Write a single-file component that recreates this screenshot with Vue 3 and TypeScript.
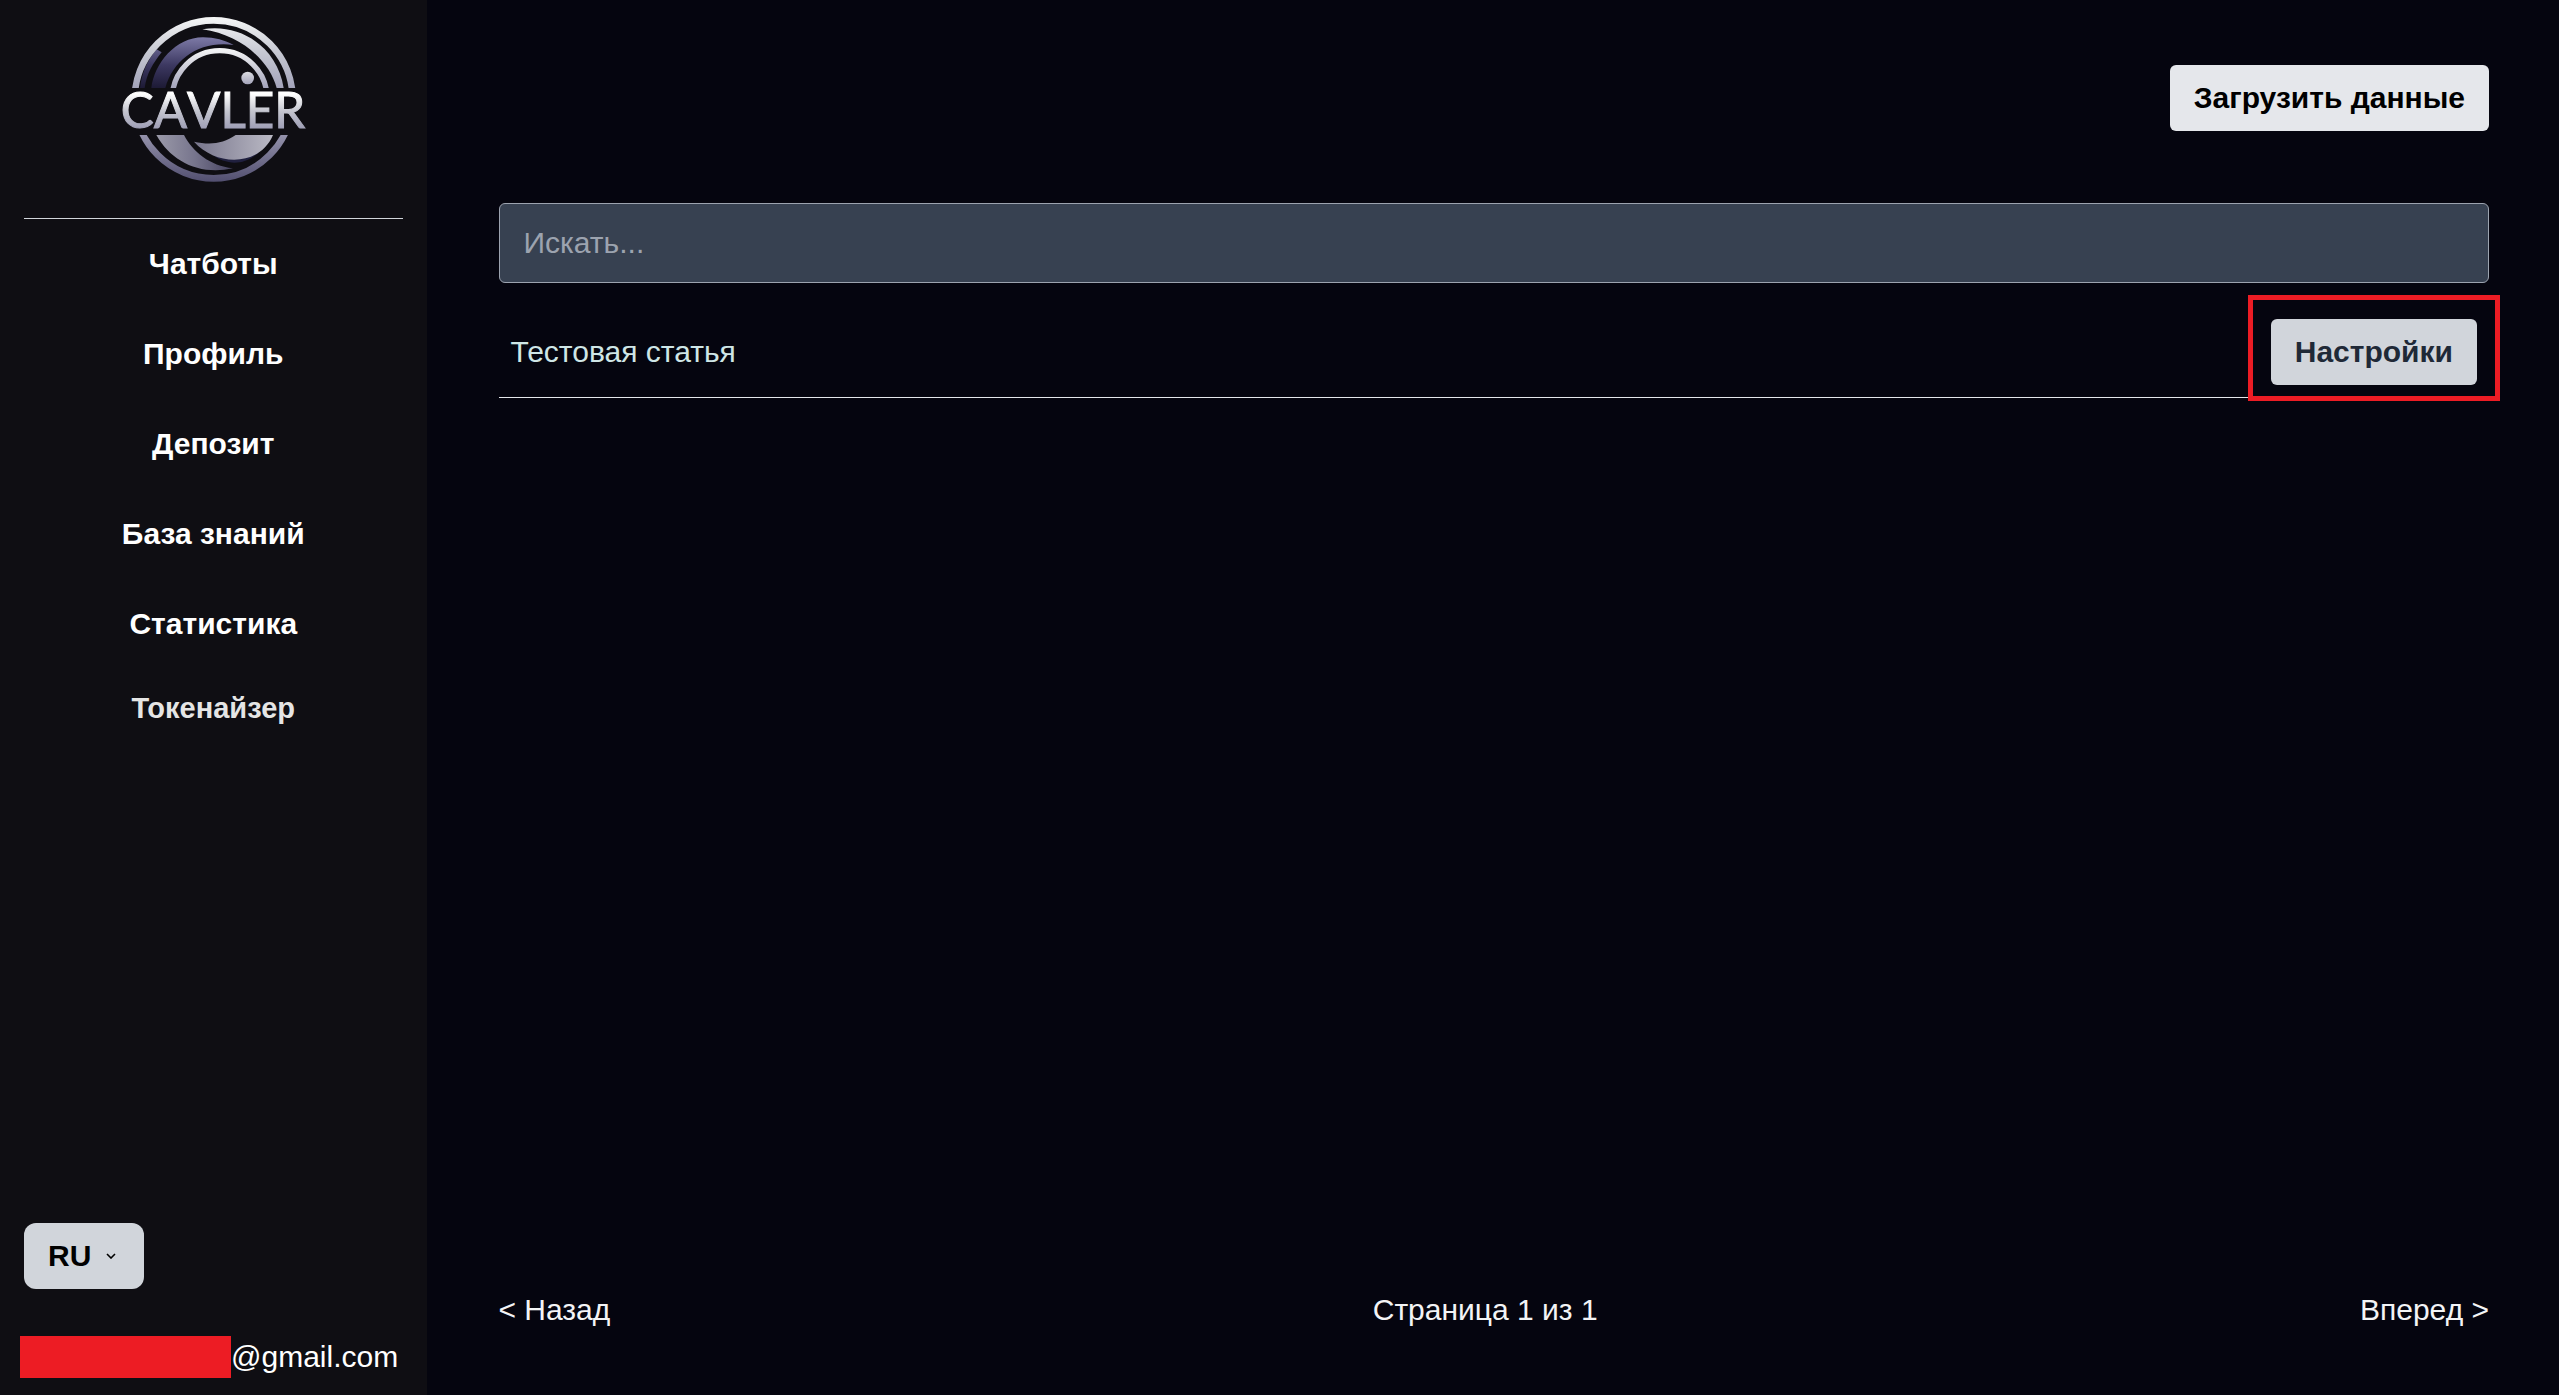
<script setup lang="ts">
import { ref } from 'vue'

interface NavItem {
  label: string
  muted?: boolean
}

const navItems: NavItem[] = [
  { label: 'Чатботы' },
  { label: 'Профиль' },
  { label: 'Депозит' },
  { label: 'База знаний' },
  { label: 'Статистика' },
  { label: 'Токенайзер', muted: true },
]

const articles = ref<string[]>(['Тестовая статья'])
const query = ref('')
const language = ref('RU')
const page = ref(1)
const pageCount = ref(1)
</script>

<template>
  <div class="app">
    <aside class="sidebar">
      <a class="brand" href="#" aria-label="Cavler">
        <svg class="logo" viewBox="52 45 576 504">
          <defs>
            <linearGradient id="ringTop" gradientUnits="userSpaceOnUse" x1="0" y1="51" x2="0" y2="264">
              <stop offset="0" stop-color="#f6f7f7" />
              <stop offset="0.5" stop-color="#c6c8d2" />
              <stop offset="1" stop-color="#a3a3ba" />
            </linearGradient>
            <linearGradient id="ringInner" gradientUnits="userSpaceOnUse" x1="0" y1="144" x2="0" y2="264">
              <stop offset="0" stop-color="#f6f7f7" />
              <stop offset="1" stop-color="#a3a3ba" />
            </linearGradient>
            <linearGradient id="dot" x1="0" y1="0" x2="0" y2="1">
              <stop offset="0" stop-color="#dcdde2" />
              <stop offset="1" stop-color="#a3a3ba" />
            </linearGradient>
            <linearGradient id="ringBottom" gradientUnits="userSpaceOnUse" x1="0" y1="405" x2="0" y2="545">
              <stop offset="0" stop-color="#9492ab" />
              <stop offset="1" stop-color="#524f70" />
            </linearGradient>
            <linearGradient id="violet" gradientUnits="userSpaceOnUse" x1="0" y1="112" x2="0" y2="264">
              <stop offset="0" stop-color="#7d7aa6" />
              <stop offset="0.55" stop-color="#3c3861" />
              <stop offset="1" stop-color="#1d1a35" />
            </linearGradient>
            <linearGradient id="waveLeft" gradientUnits="userSpaceOnUse" x1="170" y1="0" x2="400" y2="0">
              <stop offset="0" stop-color="#9b9aa9" />
              <stop offset="0.5" stop-color="#77758d" />
              <stop offset="1" stop-color="#45425f" />
            </linearGradient>
            <linearGradient id="waveRight" gradientUnits="userSpaceOnUse" x1="283" y1="0" x2="520" y2="0">
              <stop offset="0" stop-color="#77758c" />
              <stop offset="1" stop-color="#bab9c4" />
            </linearGradient>
            <linearGradient id="letters" gradientUnits="userSpaceOnUse" x1="0" y1="282" x2="0" y2="388">
              <stop offset="0" stop-color="#ffffff" />
              <stop offset="0.5" stop-color="#c3c4ce" />
              <stop offset="1" stop-color="#9d9db5" />
            </linearGradient>
            <clipPath id="upper"><rect x="52" y="45" width="576" height="219" /></clipPath>
            <clipPath id="lower"><rect x="52" y="405" width="576" height="144" /></clipPath>
          </defs>
          <g clip-path="url(#upper)" fill="none">
            <path d="M121 264 C126 218 144 180 171 148 L186 157 C160 190 141 220 135 264 Z" fill="url(#violet)" />
            <circle cx="342" cy="298" r="237" stroke="url(#ringTop)" stroke-width="20" />
            <path d="M155 264 C164 190 228 112 310 112 C345 112 376 121 402 135 C300 122 222 176 197 264 Z" fill="url(#violet)" />
            <circle cx="360" cy="294" r="142" stroke="url(#ringInner)" stroke-width="16" />
            <path d="M308 88 C420 68 533 140 552 264 L531 264 C510 186 430 106 308 88 Z" fill="url(#ringTop)" />
            <circle cx="444" cy="234" r="19" fill="url(#dot)" />
          </g>
          <text class="wordmark" x="340" y="385" text-anchor="middle" fill="url(#letters)" stroke="url(#letters)" stroke-width="3">CAVLER</text>
          <g clip-path="url(#lower)" fill="none">
            <circle cx="342" cy="298" r="237" stroke="url(#ringBottom)" stroke-width="20" />
            <path d="M170 405 L253 405 C280 456 330 497 400 505 C300 527 215 485 170 405 Z" fill="url(#waveLeft)" />
            <path d="M335 463 C385 480 430 480 480 456 C430 500 380 495 335 463 Z" fill="#20203f" />
            <path d="M408 405 L520 405 C480 500 350 500 283 425 C330 435 370 432 408 405 Z" fill="url(#waveRight)" />
          </g>
        </svg>
      </a>

      <nav class="nav">
        <a v-for="item in navItems" :key="item.label" href="#" class="nav-link" :class="{ muted: item.muted }">{{ item.label }}</a>
      </nav>

      <div class="language">
        <select v-model="language" class="language-select" aria-label="Язык">
          <option>RU</option>
          <option>EN</option>
        </select>
        <svg class="chevron" viewBox="0 0 10 6" aria-hidden="true">
          <path d="M1 1 L5 5 L9 1" fill="none" stroke="#000" stroke-width="1.6" />
        </svg>
      </div>

      <div class="account">
        <span class="redacted"></span>
        <span>@gmail.com</span>
      </div>
    </aside>

    <main class="content">
      <div class="toolbar">
        <button type="button" class="button upload">Загрузить данные</button>
      </div>

      <input v-model="query" class="search" type="text" placeholder="Искать..." aria-label="Искать" />

      <ul class="articles">
        <li v-for="title in articles" :key="title" class="article">
          <span>{{ title }}</span>
          <span class="highlight">
            <button type="button" class="button settings">Настройки</button>
          </span>
        </li>
      </ul>

      <footer class="pager">
        <button type="button" class="pager-button">&lt; Назад</button>
        <span>Страница {{ page }} из {{ pageCount }}</span>
        <button type="button" class="pager-button">Вперед &gt;</button>
      </footer>
    </main>
  </div>
</template>

<style>
body {
  background: #05050f;
}
</style>

<style scoped>
.app,
.app * {
  box-sizing: border-box;
}

.app {
  display: flex;
  min-height: 100vh;
  background: #05050f;
  color: #f3f4f6;
  font-family: "Liberation Sans", Arial, sans-serif;
  font-size: 30px;
  line-height: 42px;
}

button,
input,
select {
  margin: 0;
  font: inherit;
}

.sidebar {
  display: flex;
  flex-direction: column;
  width: calc(100% / 6);
  padding-bottom: 17px;
  background: #0f0e13;
  color: #fff;
}

.brand {
  display: flex;
  justify-content: center;
  margin: 0 24px;
  padding: 15px 0 35px;
  border-bottom: 1px solid #d1d5db;
}

.logo {
  width: 192px;
  height: 168px;
}

.wordmark {
  font-family: Lato, sans-serif;
  font-size: 148px;
  font-kerning: none;
}

.nav {
  display: flex;
  flex-direction: column;
}

.nav-link {
  padding: 24px 0;
  color: #fff;
  font-weight: 700;
  text-align: center;
  text-decoration: none;
}

.nav-link.muted {
  padding: 18px 0;
  color: #e5e5e5;
  font-size: 29px;
}

.language {
  position: relative;
  width: 120px;
  margin: auto 0 47px 24px;
}

.language-select {
  display: block;
  width: 100%;
  height: 66px;
  padding: 0 24px;
  border: 0;
  border-radius: 12px;
  appearance: none;
  background: #d1d5db;
  color: #000;
  font-weight: 700;
}

.chevron {
  position: absolute;
  top: 30px;
  right: 28px;
  width: 10px;
  height: 6px;
  pointer-events: none;
}

.account {
  display: flex;
  padding-left: 20px;
}

.redacted {
  width: 211px;
  height: 42px;
  background: #ed1c24;
}

.content {
  display: flex;
  flex: 1;
  flex-direction: column;
  padding: 65px 70px 64px 72px;
}

.toolbar {
  display: flex;
  justify-content: flex-end;
  margin-bottom: 72px;
}

.button {
  display: block;
  padding: 12px 24px;
  border: 0;
  border-radius: 6px;
  font-weight: 700;
}

.upload {
  background: #e5e7eb;
  color: #000;
}

.search {
  width: 100%;
  height: 80px;
  padding: 0 24px;
  border: 1px solid #9ca3af;
  border-radius: 6px;
  background: #374151;
  color: #f3f4f6;
}

.search::placeholder {
  color: #9ca3af;
  opacity: 1;
}

.articles {
  margin: 24px 0 0;
  padding: 0;
  list-style: none;
}

.article {
  display: flex;
  align-items: center;
  justify-content: space-between;
  padding: 12px;
  border-bottom: 1px solid #e5e7eb;
  color: #cfe6e6;
}

.highlight {
  position: relative;
}

.highlight::after {
  position: absolute;
  inset: -24px -23px -16px;
  border: 5px solid #ed1c24;
  content: "";
  pointer-events: none;
}

.settings {
  background: #d1d5db;
  color: #1f2937;
}

.pager {
  display: flex;
  justify-content: space-between;
  margin-top: auto;
}

.pager-button {
  padding: 0;
  border: 0;
  background: none;
  color: inherit;
}
</style>
